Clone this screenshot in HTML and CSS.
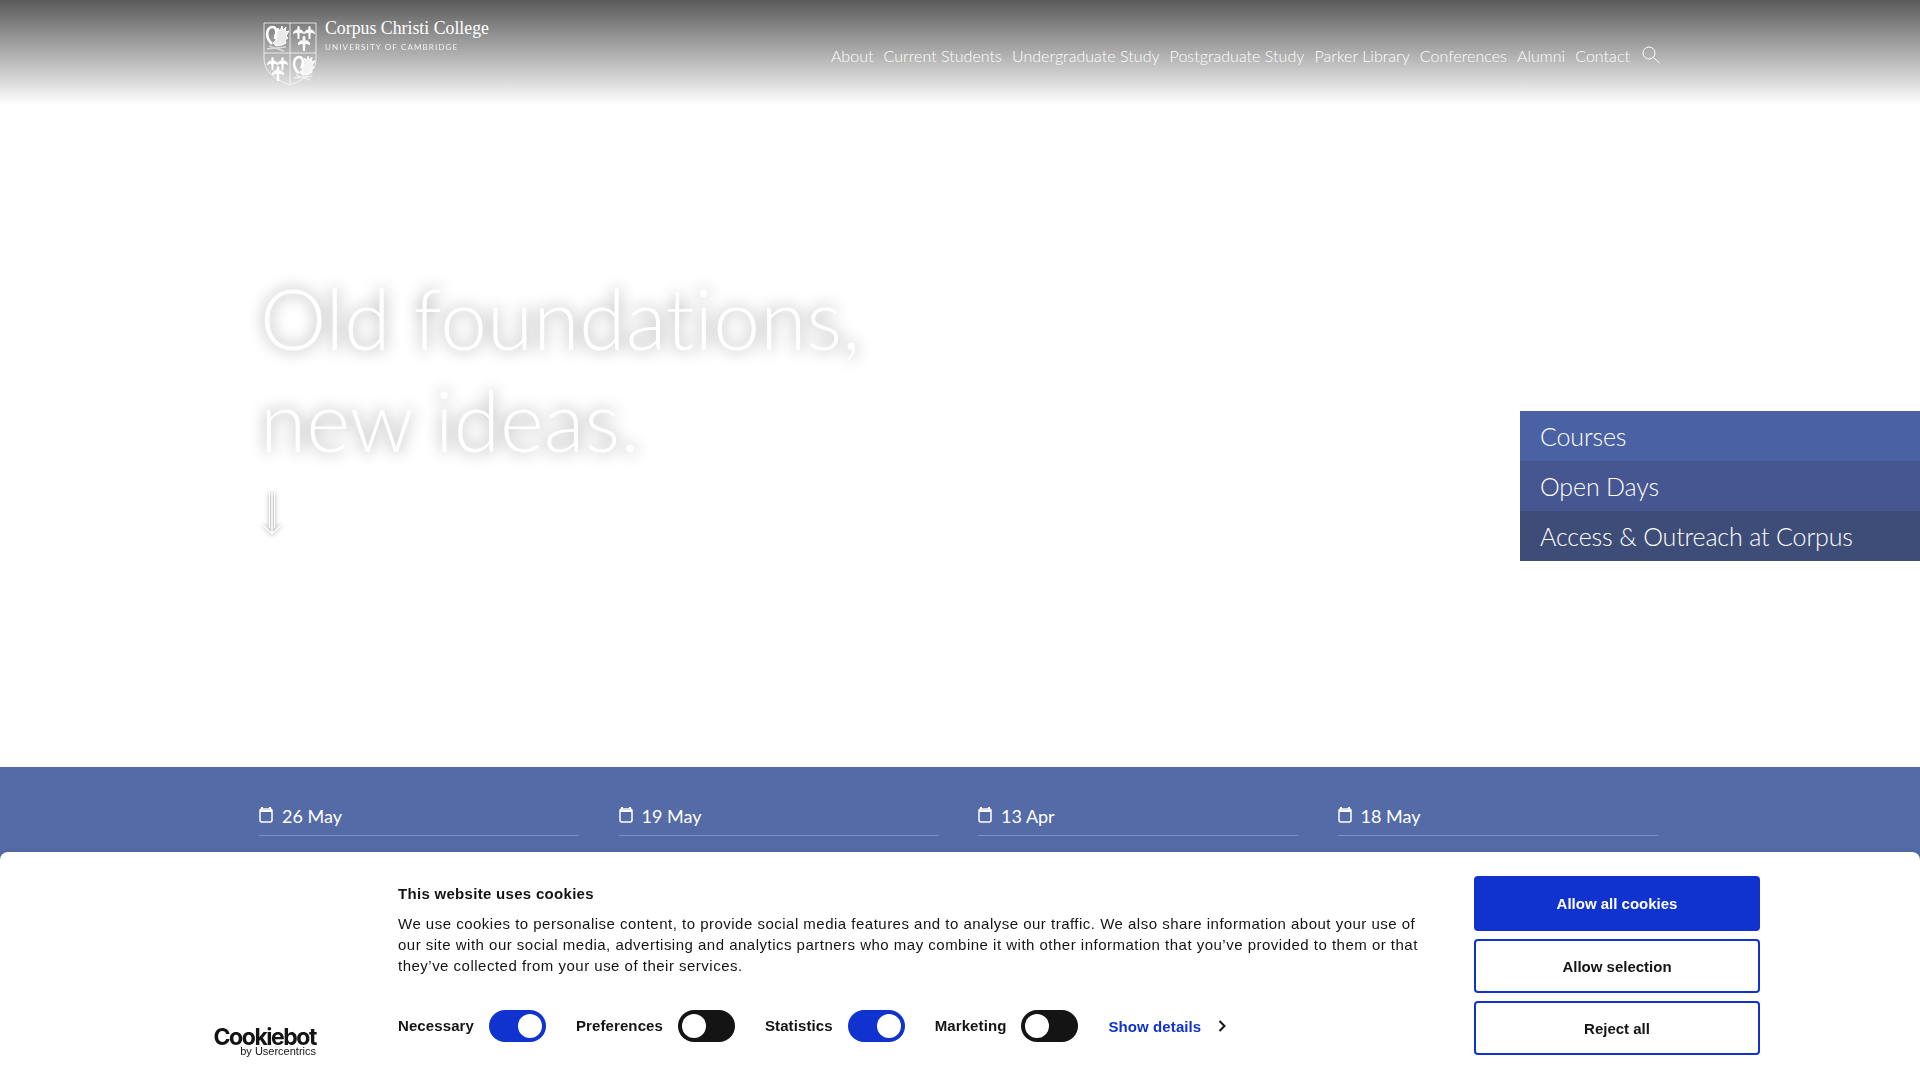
FILE: index.html
```html
<!DOCTYPE html>
<html lang="en">
<head>
    <meta charset="UTF-8">
    <meta name="viewport" content="width=device-width, initial-scale=1.0">
    <title>Corpus Christi College</title>
    <link rel="stylesheet" href="styles.css">
</head>
<body>
    <svg class="svg-defs" width="0" height="0">
        <symbol id="lily" viewBox="0 0 12 15">
            <path fill="#fff" d="M6 0C7.5 2 7 4 6.5 5.5C8 4 11 4.5 12 9C10 7.5 8 7 6.8 8L6.5 15L5.5 15L5.2 8C4 7 2 7.5 0 9C1 4.5 4 4 5.5 5.5C5 4 4.5 2 6 0Z"/>
        </symbol>
        <symbol id="pelican" viewBox="0 0 24 27">
            <path fill="none" stroke="#fff" stroke-width="2.6" d="M7 19C3 15 1 10 3 5C5 1 10 1 11 5C12 8 10 11 10 14"/>
            <path fill="#fff" fill-opacity=".8" d="M11 9L13 3L15 6L17 1L18 5L21 2L20 7L24 6L21 11L23 13L20 15L21 18L17 20L11 21L8 18L11 15Z"/>
            <path fill="none" stroke="#fff" stroke-opacity=".6" stroke-width="1.6" d="M2 24L21 22M4 21L19 26"/>
        </symbol>
    </svg>

    <header class="site-header">
        <a class="brand" href="#">
            <svg class="crest" width="54" height="64" viewBox="0 0 54 64" fill="none" stroke="#fff">
                <path d="M1 1H53V36C53 50 41 58 27 63C13 58 1 50 1 36Z" stroke-opacity=".75"/>
                <path d="M27 1V62M1 31H53" stroke-opacity=".75"/>
                <use href="#pelican" x="2" y="3" width="24" height="27"/>
                <use href="#lily" x="30" y="4" width="11" height="13"/>
                <use href="#lily" x="41" y="4" width="11" height="13"/>
                <use href="#lily" x="35" y="14" width="12" height="15"/>
                <use href="#lily" x="4" y="35" width="11" height="13"/>
                <use href="#lily" x="14" y="35" width="11" height="13"/>
                <use href="#lily" x="9" y="44" width="12" height="15"/>
                <use href="#pelican" x="29" y="33" width="23" height="26"/>
            </svg>
            <span class="brand-text">
                <span class="brand-name">Corpus Christi College</span>
                <span class="brand-sub">UNIVERSITY OF CAMBRIDGE</span>
            </span>
        </a>
        <nav class="main-nav">
            <a href="#">About</a>
            <a href="#">Current Students</a>
            <a href="#">Undergraduate Study</a>
            <a href="#">Postgraduate Study</a>
            <a href="#">Parker Library</a>
            <a href="#">Conferences</a>
            <a href="#">Alumni</a>
            <a href="#">Contact</a>
            <svg class="search-icon" width="18" height="18" viewBox="0 0 18 18" fill="none" stroke="#fff" stroke-width="1">
                <circle cx="7" cy="7" r="6"/>
                <path d="M11.5 11.5L17.5 17"/>
            </svg>
        </nav>
    </header>

    <section class="hero">
        <div class="hero-text">
            <h1>Old foundations,<br>new ideas.</h1>
            <svg class="hero-arrow" width="20" height="44" viewBox="0 0 20 44" fill="none" stroke="#fff" stroke-width="1.5">
                <path d="M10 1V42M1 33L10 42L19 33"/>
                <path d="M7.5 1V36M12.5 1V36" stroke-width="1"/>
            </svg>
        </div>
        <ul class="side-links">
            <li class="side-link-1">Courses</li>
            <li class="side-link-2">Open Days</li>
            <li class="side-link-3">Access &amp; Outreach at Corpus</li>
        </ul>
    </section>

    <section class="events">
        <div class="event">
            <svg class="cal-icon" width="14" height="16" viewBox="0 0 14 16"><path d="M3 0V2M11 0V2" stroke="#fff" stroke-width="2"/><rect x="1" y="2" width="12" height="13" rx="2" fill="none" stroke="#fff" stroke-width="1.5"/><path d="M1 3H13V5H1Z" fill="#fff"/></svg>
            <span class="event-date">26 May</span>
        </div>
        <div class="event">
            <svg class="cal-icon" width="14" height="16" viewBox="0 0 14 16"><path d="M3 0V2M11 0V2" stroke="#fff" stroke-width="2"/><rect x="1" y="2" width="12" height="13" rx="2" fill="none" stroke="#fff" stroke-width="1.5"/><path d="M1 3H13V5H1Z" fill="#fff"/></svg>
            <span class="event-date">19 May</span>
        </div>
        <div class="event">
            <svg class="cal-icon" width="14" height="16" viewBox="0 0 14 16"><path d="M3 0V2M11 0V2" stroke="#fff" stroke-width="2"/><rect x="1" y="2" width="12" height="13" rx="2" fill="none" stroke="#fff" stroke-width="1.5"/><path d="M1 3H13V5H1Z" fill="#fff"/></svg>
            <span class="event-date">13 Apr</span>
        </div>
        <div class="event">
            <svg class="cal-icon" width="14" height="16" viewBox="0 0 14 16"><path d="M3 0V2M11 0V2" stroke="#fff" stroke-width="2"/><rect x="1" y="2" width="12" height="13" rx="2" fill="none" stroke="#fff" stroke-width="1.5"/><path d="M1 3H13V5H1Z" fill="#fff"/></svg>
            <span class="event-date">18 May</span>
        </div>
    </section>

    <div class="cookie-dialog">
        <div class="cookie-logo">
            <span class="cookie-logo-name">Cookiebot</span>
            <span class="cookie-logo-sub">by Usercentrics</span>
        </div>
        <div class="cookie-main">
            <h2>This website uses cookies</h2>
            <p>We use cookies to personalise content, to provide social media features and to analyse our traffic. We also share information about your use of our site with our social media, advertising and analytics partners who may combine it with other information that you’ve provided to them or that they’ve collected from your use of their services.</p>
            <div class="cookie-options">
                <span class="option-label">Necessary</span>
                <span class="toggle toggle-on"></span>
                <span class="option-label">Preferences</span>
                <span class="toggle"></span>
                <span class="option-label">Statistics</span>
                <span class="toggle toggle-on"></span>
                <span class="option-label">Marketing</span>
                <span class="toggle"></span>
                <a class="show-details" href="#">Show details</a>
                <svg class="chevron" width="8" height="12" viewBox="0 0 8 12" fill="none" stroke="#141414" stroke-width="2"><path d="M1.5 1L6.5 6L1.5 11"/></svg>
            </div>
        </div>
        <div class="cookie-buttons">
            <button class="btn-primary">Allow all cookies</button>
            <button class="btn-outline">Allow selection</button>
            <button class="btn-outline">Reject all</button>
        </div>
    </div>
</body>
</html>
```

FILE: styles.css
```css
body {
    margin: 0;
    font-family: Lato, Arial, sans-serif;
    font-weight: 300;
    font-variant-ligatures: none;
    background-color: #fff;
    color: #fff;
    height: 1080px;
    overflow: hidden;
}
a {
    color: inherit;
    text-decoration: none;
}
.svg-defs {
    display: block;
}

.site-header {
    display: flex;
    justify-content: space-between;
    height: 105px;
    padding: 0 260px 0 263px;
    background: linear-gradient(#5a5a5a, #fff);
}
.brand {
    display: flex;
    gap: 8px;
    padding-top: 22px;
}
.brand-text {
    display: flex;
    flex-direction: column;
    margin-top: -1px;
}
.brand-name {
    font-family: "Liberation Serif", serif;
    font-size: 17.8px;
    line-height: 14px;
}
.brand-sub {
    font-size: 8px;
    font-weight: 400;
    letter-spacing: 1.13px;
    margin-top: 7px;
    opacity: .85;
}
.main-nav {
    display: flex;
    gap: 10px;
    padding-top: 46px;
    font-size: 16px;
    line-height: 20px;
    height: 20px;
    letter-spacing: .04px;
}
.search-icon {
    margin: 0 0 0 2px;
}

.hero {
    display: flex;
    justify-content: space-between;
    height: 662px;
}
.hero-text {
    padding: 162px 0 0 260px;
}
h1 {
    margin: 0;
    font-size: 84px;
    line-height: 102px;
    font-weight: 300;
    text-shadow: 0 0 16px rgba(0, 0, 0, .45);
}
.hero-arrow {
    display: block;
    margin: 21px 0 0 2px;
    filter: drop-shadow(0 0 2px rgba(0, 0, 0, .45));
}
.side-links {
    list-style: none;
    margin: 306px 0 0;
    padding: 0;
    width: 400px;
    font-size: 25px;
    letter-spacing: -.15px;
}
.side-links li {
    height: 50px;
    line-height: 50px;
    padding-left: 20px;
}
.side-link-1 {
    background-color: #4a62a3;
}
.side-link-2 {
    background-color: #455690;
}
.side-link-3 {
    background-color: #3e4c78;
}

.events {
    display: grid;
    grid-template-columns: repeat(4, 320px);
    gap: 39.5px;
    height: 313px;
    padding-left: 259px;
    background-color: #546ba7;
    font-size: 18px;
    font-weight: 400;
}
.event {
    display: flex;
    align-items: center;
    gap: 9px;
    height: 36px;
    padding-top: 32px;
    border-bottom: 1px solid #7c90c4;
}
.event-date {
    margin-bottom: 2px;
}
.cal-icon {
    margin: 0 0 4px 0;
}

/* cookie banner sits on top of the page */
.cookie-dialog {
    position: fixed;
    left: 0;
    right: 0;
    bottom: 0;
    height: 228px;
    display: flex;
    background-color: #fff;
    border-radius: 8px 8px 0 0;
    font-family: "Liberation Sans", Arial, sans-serif;
    font-weight: 400;
    font-variant-ligatures: normal;
    color: #141414;
    box-shadow: 0 0 4px rgba(0, 0, 0, .1);
}
.cookie-logo {
    display: flex;
    flex-direction: column;
    align-items: flex-end;
    width: 102px;
    margin: 176px 82px 0 214px;
}
.cookie-logo-name {
    font-family: Inter, sans-serif;
    font-size: 23px;
    font-weight: 700;
    letter-spacing: -1.45px;
    line-height: 18px;
}
.cookie-logo-sub {
    font-size: 11px;
    line-height: 11px;
}
.cookie-main {
    width: 1028px;
    padding-top: 33px;
}
.cookie-main h2 {
    margin: 0;
    font-size: 15px;
    line-height: 18px;
    font-weight: 700;
    letter-spacing: .3px;
}
.cookie-main p {
    margin: 10px 0 0;
    font-size: 15px;
    line-height: 21px;
    letter-spacing: .49px;
}
.cookie-options {
    display: flex;
    align-items: center;
    margin-top: 34px;
    height: 32px;
}
.option-label {
    font-size: 15px;
    font-weight: 700;
    letter-spacing: .1px;
    margin-right: 15px;
    margin-top: -1px;
}
.toggle {
    display: flex;
    justify-content: flex-start;
    box-sizing: border-box;
    width: 57px;
    height: 32px;
    padding: 4px;
    margin-right: 30px;
    border-radius: 16px;
    background-color: #141414;
}
.toggle::after {
    content: "";
    width: 24px;
    height: 24px;
    border-radius: 50%;
    background-color: #fff;
}
.toggle-on {
    justify-content: flex-end;
    background-color: #1032cf;
}
.show-details {
    font-size: 15px;
    font-weight: 700;
    letter-spacing: .1px;
    color: #1032cf;
    margin-right: 17px;
}
.cookie-buttons {
    display: flex;
    flex-direction: column;
    gap: 8px;
    width: 286px;
    margin: 24px 0 0 48px;
}
.cookie-buttons button {
    height: 55px;
    border-radius: 4px;
    border: 2px solid #1032cf;
    font-family: "Liberation Sans", Arial, sans-serif;
    font-size: 15px;
    font-weight: 700;
}
.btn-primary {
    background-color: #1032cf;
    color: #fff;
}
.cookie-buttons .btn-outline {
    height: 54px;
    background-color: #fff;
    color: #141414;
}
```
